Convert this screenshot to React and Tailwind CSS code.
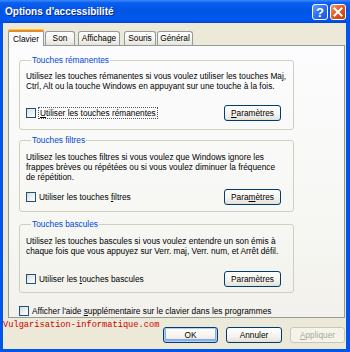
import React from 'react';

const Checkbox = () => (
    <span className="inline-block w-[10px] h-[10px] shrink-0 border border-[#1c5180] bg-[linear-gradient(135deg,#dcdcd7_0%,#f2f2ee_60%,#ffffff_100%)]"></span>
);

const Button = ({ children, w = 'w-[57px]', className = '' }) => (
    <button className={`${w} h-[16px] rounded-[3px] border border-[#003c74] bg-[linear-gradient(180deg,#ffffff_0%,#f4f3ee_60%,#e3e0d6_100%)] text-black flex items-center justify-center leading-none ${className}`}>
        {children}
    </button>
);

const Group = ({ title, lines, label, btn, textPad, rowGap, bottomPad, className = '' }) => (
    <fieldset className={`w-[275px] border border-[#d0d0bf] rounded-[3px] px-[6px] ${className}`}>
        <legend className="px-[1px] ml-[5px] text-[#0046d5] leading-[10px]">{title}</legend>
        <div className={textPad}>
            {lines.map((l, i) => (
                <div key={i} className="leading-[10px] whitespace-nowrap">{l}</div>
            ))}
        </div>
        <div className={`flex items-center justify-between pr-[6px] ${rowGap} ${bottomPad}`}>
            <div className="flex items-center gap-[3px]">
                <Checkbox />
                <span className="leading-[10px]">{label}</span>
            </div>
            <Button>{btn}</Button>
        </div>
    </fieldset>
);

const Tab = ({ children, active, w }) => (
    active ? (
        <div className={`${w} h-[17px] relative z-10 -mb-[1px] border border-b-0 border-[#919b9c] rounded-t-[3px] bg-[#fcfcfe] flex items-center justify-center`}>
            <span className="absolute left-[-1px] right-[-1px] top-[-1px] h-[3px] rounded-t-[3px] bg-[#e68b2c] border-t border-[#ffc73c]"></span>
            <span className="pt-[2px]">{children}</span>
        </div>
    ) : (
        <div className={`${w} h-[14px] border border-b-0 border-[#919b9c] rounded-t-[3px] bg-[linear-gradient(180deg,#ffffff_0%,#f3f2ec_60%,#e6e3d8_100%)] flex items-center justify-center`}>
            {children}
        </div>
    )
);

const App = () => {
    return (
        <div className="w-[350px] h-[352px] flex flex-col bg-[#0055ea] overflow-hidden font-['Liberation_Sans',Arial,sans-serif] text-[8.3px] text-black select-none">
            {/* Title bar */}
            <div className="h-[23px] shrink-0 flex items-center justify-between pl-[5px] pr-[4px] bg-[linear-gradient(180deg,#3c8cf8_0%,#0a5ff0_12%,#0055e5_45%,#0058ee_85%,#0046d4_100%)]">
                <span className="text-white font-bold text-[10px] [text-shadow:1px_1px_0_#0a2a8a] font-['Liberation_Sans',sans-serif]">Options d'accessibilité</span>
                <div className="flex gap-[2px] pt-[1px]">
                    <div className="w-[16px] h-[16px] rounded-[3px] border border-white bg-[linear-gradient(135deg,#6ea0ff_0%,#2b6ef0_50%,#1f57d8_100%)] flex items-center justify-center text-white font-bold text-[13px] leading-none font-['Liberation_Sans',sans-serif]">?</div>
                    <div className="w-[16px] h-[16px] rounded-[3px] border border-white bg-[linear-gradient(135deg,#f39a7a_0%,#e3571f_50%,#c43c0e_100%)] flex items-center justify-center">
                        <svg width="10" height="10" viewBox="0 0 10 10">
                            <path d="M1.5 1.5 L8.5 8.5 M8.5 1.5 L1.5 8.5" stroke="#fff" strokeWidth="2" strokeLinecap="square" />
                        </svg>
                    </div>
                </div>
            </div>

            {/* Body */}
            <div className="flex-1 ml-[3px] mr-[4px] mb-[3px] bg-[#ece9d8] relative flex flex-col pl-[5px] pr-[1px] pt-[5px]">
                {/* Tabs */}
                <div className="flex items-end h-[17px] gap-[1px]">
                    <Tab active w="w-[36px]">Clavier</Tab>
                    <Tab w="w-[30px]">Son</Tab>
                    <div className="w-[1px]"></div>
                    <Tab w="w-[42px]">Affichage</Tab>
                    <div className="w-[2px]"></div>
                    <Tab w="w-[32px]">Souris</Tab>
                    <Tab w="w-[36px]">Général</Tab>
                </div>

                {/* Panel */}
                <div className="h-[273px] border border-[#919b9c] bg-[linear-gradient(180deg,#fcfcfe_0%,#f6f6f2_70%,#f2f1eb_100%)] pl-[10px] pt-[9px] flex flex-col">
                    <Group
                        title="Touches rémanentes"
                        lines={[
                            'Utilisez les touches rémanentes si vous voulez utiliser les touches Maj,',
                            'Ctrl, Alt ou la touche Windows en appuyant sur une touche à la fois.',
                        ]}
                        label={<span className="outline outline-1 outline-dotted outline-[#555] px-[1px]"><u>U</u>tiliser les touches rémanentes</span>}
                        btn={<span><u>P</u>aramètres</span>}
                        textPad="pt-[6px]"
                        rowGap="mt-[14px]"
                        bottomPad="mb-[8px]"
                    />
                    <Group
                        title="Touches filtres"
                        lines={[
                            'Utilisez les touches filtres si vous voulez que Windows ignore les',
                            'frappes brèves ou répétées ou si vous voulez diminuer la fréquence',
                            'de répétition.',
                        ]}
                        label={<span>Utiliser les touches <u>f</u>iltres</span>}
                        btn={<span>Para<u>m</u>ètres</span>}
                        textPad="pt-[7px]"
                        rowGap="mt-[7px]"
                        bottomPad="mb-[6px]"
                        className="mt-[5px]"
                    />
                    <Group
                        title="Touches bascules"
                        lines={[
                            'Utilisez les touches bascules si vous voulez entendre un son émis à',
                            'chaque fois que vous appuyez sur Verr. maj, Verr. num, et Arrêt défil.',
                        ]}
                        label={<span>Utiliser les <u>t</u>ouches bascules</span>}
                        btn={<span>Paramètres</span>}
                        textPad="pt-[7px]"
                        rowGap="mt-[15px]"
                        bottomPad="mb-[5px]"
                        className="mt-[7px]"
                    />
                    <div className="flex items-center gap-[3px] mt-[12px]">
                        <Checkbox />
                        <span>Afficher l'aide <u>s</u>upplémentaire sur le clavier dans les programmes</span>
                    </div>
                </div>

                {/* Bottom buttons */}
                <div className="flex justify-end gap-[8px] mt-[9px]">
                    <Button w="w-[55px]" className="shadow-[inset_0_0_0_1px_#b8d0f9,inset_0_-1px_0_2px_#89ade4]">OK</Button>
                    <Button w="w-[56px]">Annuler</Button>
                    <button className="w-[55px] h-[16px] rounded-[3px] border border-[#c9c7ba] bg-[#f5f4ea] text-[#aca899] flex items-center justify-center leading-none">
                        <span><u>A</u>ppliquer</span>
                    </button>
                </div>

                {/* Watermark */}
                <span className="absolute left-[0px] top-[298px] font-['Liberation_Mono',monospace] text-[8.7px] leading-none text-[#cc0000]">Vulgarisation-informatique.com</span>
            </div>
        </div>
    );
};

export default App;
